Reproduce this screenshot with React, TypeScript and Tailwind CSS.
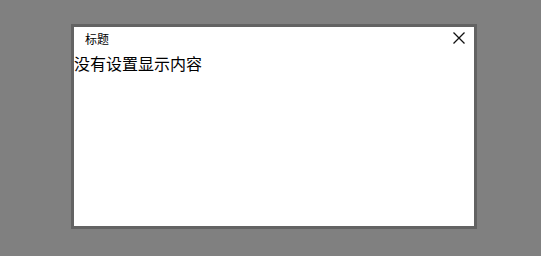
import React from "react";

export default function App() {
  return (
    <div className="w-[541px] h-[256px] bg-[#808080] pt-[24px] pl-[71px] overflow-hidden" style={{ fontFamily: '"Noto Sans CJK SC", "Noto Sans", sans-serif' }}>
      <div className="w-[406px] h-[205px] border-[3px] border-[#636363] bg-white flex flex-col">
        <div className="h-[27px] flex items-start justify-between pl-[11px] pr-[9px]">
          <span className="mt-[6px] text-[12px] leading-none text-black">标题</span>
          <svg width="12" height="12" viewBox="0 0 12 12" className="block mt-[5px]">
            <path d="M0.5 0.5 L11.5 11.5 M11.5 0.5 L0.5 11.5" stroke="#111" strokeWidth="1.3" fill="none" />
          </svg>
        </div>
        <div className="text-[16px] leading-[19px] text-black">没有设置显示内容</div>
      </div>
    </div>
  );
}
